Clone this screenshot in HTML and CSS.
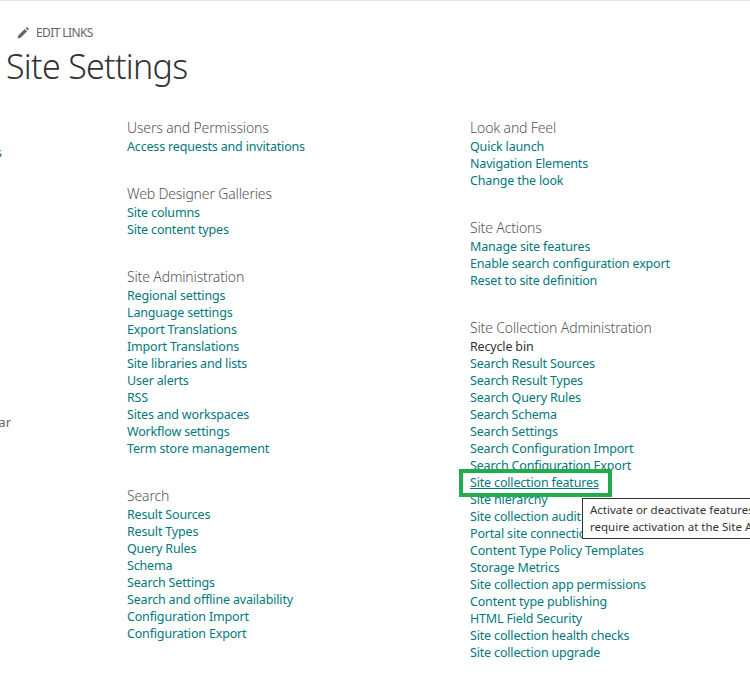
FILE: index.html
```html
<!DOCTYPE html>
<html lang="en">
<head>
  <meta charset="UTF-8">
  <title>Site Settings</title>
  <link rel="stylesheet" href="styles.css">
</head>
<body>
  <header class="page-head">
    <a class="edit-links">
      <svg class="edit-icon" width="12" height="12" viewBox="0 0 12 12"><path d="M0.5 11.5 L1.3 8.4 L7.8 1.9 L10.1 4.2 L3.6 10.7 Z M8.6 1.1 L9.5 0.3 Q9.9 0 10.3 0.3 L11.7 1.7 Q12 2.1 11.7 2.5 L10.9 3.4 Z"/></svg>
      EDIT LINKS
    </a>
    <h1>Site Settings</h1>
  </header>

  <div class="content">
    <nav class="side-nav">
      <span class="nav-clip nav-link">Lists</span>
      <span class="nav-clip nav-calendar">Calendar</span>
    </nav>

    <div class="col col-left">
      <section>
        <h2>Users and Permissions</h2>
        <a>Access requests and invitations</a>
      </section>
      <section>
        <h2>Web Designer Galleries</h2>
        <a>Site columns</a>
        <a>Site content types</a>
      </section>
      <section>
        <h2>Site Administration</h2>
        <a>Regional settings</a>
        <a>Language settings</a>
        <a>Export Translations</a>
        <a>Import Translations</a>
        <a>Site libraries and lists</a>
        <a>User alerts</a>
        <a>RSS</a>
        <a>Sites and workspaces</a>
        <a>Workflow settings</a>
        <a>Term store management</a>
      </section>
      <section>
        <h2>Search</h2>
        <a>Result Sources</a>
        <a>Result Types</a>
        <a>Query Rules</a>
        <a>Schema</a>
        <a>Search Settings</a>
        <a>Search and offline availability</a>
        <a>Configuration Import</a>
        <a>Configuration Export</a>
      </section>
    </div>

    <div class="col col-right">
      <section>
        <h2>Look and Feel</h2>
        <a>Quick launch</a>
        <a>Navigation Elements</a>
        <a>Change the look</a>
      </section>
      <section>
        <h2>Site Actions</h2>
        <a>Manage site features</a>
        <a>Enable search configuration export</a>
        <a>Reset to site definition</a>
      </section>
      <section>
        <h2>Site Collection Administration</h2>
        <a class="dark">Recycle bin</a>
        <a>Search Result Sources</a>
        <a>Search Result Types</a>
        <a>Search Query Rules</a>
        <a>Search Schema</a>
        <a>Search Settings</a>
        <a>Search Configuration Import</a>
        <a>Search Configuration Export</a>
        <a class="hovered">
          <span class="hover-text">Site collection features</span>
          <span class="highlight"></span>
          <span class="tooltip">Activate or deactivate features on this site collection that<br>require activation at the Site Administration level</span>
        </a>
        <a>Site hierarchy</a>
        <a>Site collection audit settings</a>
        <a>Portal site connection</a>
        <a>Content Type Policy Templates</a>
        <a>Storage Metrics</a>
        <a>Site collection app permissions</a>
        <a>Content type publishing</a>
        <a>HTML Field Security</a>
        <a>Site collection health checks</a>
        <a>Site collection upgrade</a>
      </section>
    </div>
  </div>
</body>
</html>
```

FILE: styles.css
```css
* {
  margin: 0;
  padding: 0;
  box-sizing: border-box;
}
html, body {
  height: 680px;
  overflow: hidden;
}
body {
  font-family: 'Noto Sans', 'Open Sans', Arial, sans-serif;
  background-color: #ffffff;
  color: #444444;
  border-top: 1px solid #e4e4e4;
}
.page-head {
  padding-top: 24px;
  padding-left: 6px;
}
.edit-links {
  display: flex;
  align-items: center;
  gap: 7px;
  padding-left: 11px;
  font-size: 12px;
  line-height: 16px;
  color: #666666;
  letter-spacing: -0.6px;
}
.edit-icon {
  fill: #666666;
}
h1 {
  font-size: 34px;
  font-weight: 300;
  line-height: 46px;
  margin-top: 2px;
  color: #333333;
  letter-spacing: -0.7px;
}
.content {
  display: flex;
  padding-top: 28px;
}
.side-nav {
  width: 127px;
  flex-shrink: 0;
  display: flex;
  flex-direction: column;
  overflow: hidden;
}
.nav-clip {
  font-size: 13px;
  line-height: 17px;
  white-space: nowrap;
  direction: rtl;
  overflow: hidden;
}
.nav-link {
  margin-top: 27px;
  width: 2px;
  color: #3a5a9a;
}
.nav-calendar {
  margin-top: 253px;
  width: 11px;
  color: #666666;
}
.col-left {
  width: 343px;
  flex-shrink: 0;
}
.col-right {
  flex: 1;
}
section {
  margin-bottom: 28px;
}
h2 {
  font-size: 14px;
  font-weight: 300;
  line-height: 21px;
  color: #555555;
  letter-spacing: -0.15px;
}
section a {
  display: block;
  font-size: 12.5px;
  line-height: 17px;
  color: #03787c;
  white-space: nowrap;
  letter-spacing: -0.17px;
}
section a.dark {
  color: #333333;
}
.hovered {
  position: relative;
}
.hover-text {
  text-decoration: underline;
}
.highlight {
  position: absolute;
  left: -11px;
  top: -5px;
  width: 153px;
  height: 28px;
  border: 4px solid #22ac4f;
}
.tooltip {
  position: absolute;
  left: 112px;
  top: 24px;
  padding: 3px 7px 0;
  height: 41px;
  width: 400px;
  background-color: #ffffff;
  border: 1px solid #333333;
  font-size: 11.5px;
  line-height: 16.5px;
  color: #333333;
  letter-spacing: 0;
}
```
